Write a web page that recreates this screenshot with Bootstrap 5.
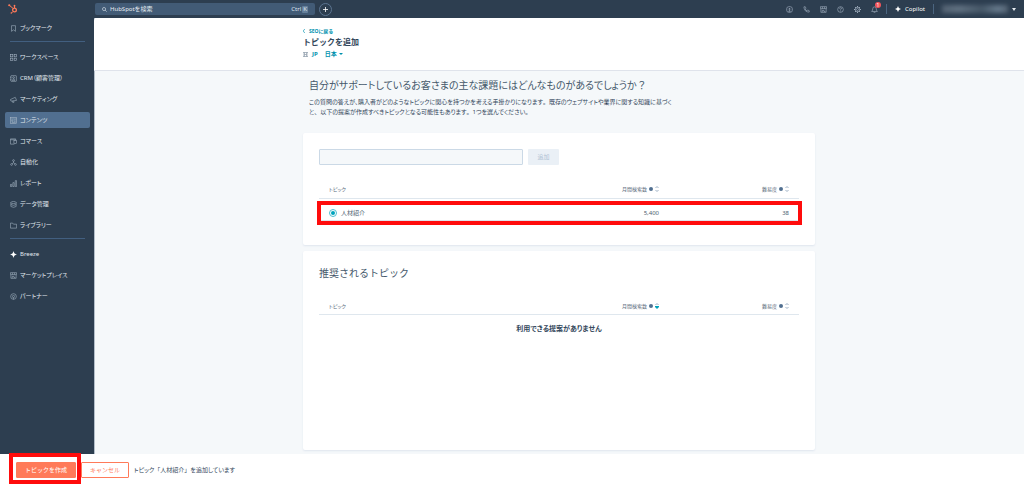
<!DOCTYPE html>
<html lang="ja">
<head>
<meta charset="utf-8">
<meta name="viewport" content="width=device-width, initial-scale=1">
<title>トピックを追加</title>
<link href="https://cdn.jsdelivr.net/npm/bootstrap@5.3.0/dist/css/bootstrap.min.css" rel="stylesheet">
<style>
  :root { --navy:#2d3e50; --slate:#425b76; --ink:#33475b; --teal:#0091ae; --orange:#ff7a59; --mist:#f5f8fa; --mark-red:#ff0c0c; }
  body { font-family:"Noto Sans","Noto Sans CJK JP",sans-serif; font-size:6px; line-height:10px; color:var(--ink); font-feature-settings:"palt"; background:#fff; }
  svg { display:block; flex:none; fill:none; stroke:currentColor; stroke-width:1.3; }
  a { text-decoration:none; }
  button { line-height:10px; }
  .ic { width:7px; height:7px; }
  .full { font-feature-settings:normal; }

  .topbar { background:var(--navy); height:18px; color:#b6c3d0; }
  .brand { width:95px; padding-left:8px; color:var(--orange); }
  .brand svg { width:10px; height:10px; stroke-width:2; }
  .searchbox { width:220px; height:12px; background:var(--slate); border-radius:2px; padding:0 9px 0 7px; gap:3px; color:#dde5ed; }
  .searchbox svg { width:5px; height:5px; stroke-width:2; }
  .searchbox input { border:0; background:none; color:inherit; font-size:6px; line-height:10px; padding:0; outline:0; min-width:0; }
  .searchbox input::placeholder { color:#e6ecf2; opacity:1; }
  .searchbox kbd { font:inherit; color:#dde5ed; background:none; padding:0; margin-right:-2px; }
  .searchbox kbd + kbd { background:#65809b; border-radius:1px; padding:0 1px; line-height:7px; }
  .plus { width:13px; height:13px; border:1px solid #5b7490; border-radius:50%; margin-left:4px; color:#fff; }
  .plus svg { width:5px; height:5px; }
  .tool { width:7px; height:12px; color:#aab9c8; }
  .tools { gap:10px; }
  .alert-dot { top:-1px; left:4px; width:6px; height:6px; border-radius:50%; background:#f2545b; color:#fff; font-size:5px; line-height:6px; }
  .rule-v { width:1px; height:10px; background:#4b6580; }
  .account { width:66px; height:8px; background:linear-gradient(90deg,#526171,#607080 25%,#465767 60%,#65788a 85%,#526171); filter:blur(2px); }
  .caret { width:0; height:0; border:2px solid transparent; border-top:3px solid #e5ebf0; border-bottom:0; }
  .caret-teal { border-top:2px solid var(--teal); margin-left:2px; }

  .side { width:94px; background:var(--navy); padding:2px 4px 0 5px; }
  .side a { height:16px; margin-bottom:5px; padding-left:5px; gap:3px; color:#e1e8ef; border-radius:2px; }
  .side a svg { color:#a9b8c7; }
  .side a.active { background:#516f90; }
  .side hr { margin:3px 0 7px 5px; border-top:1px solid #425f80; opacity:1; width:75px; }

  .page { background:var(--mist); box-shadow:inset 1px 0 #b4bfca; min-width:0; }
  .page-head { background:#fff; border-bottom:1px solid #dfe3eb; height:53px; border-top-left-radius:3px; padding-top:8px; }
  .page-wrap { background:var(--navy); }
  .column-main { width:100%; max-width:512px; }
  .text-teal { color:var(--teal); }
  .back { font-size:5px; }
  .title-main { font-size:8px; line-height:12px; }
  .locale { padding-top:1px; }
  .locale button { font-size:6px; margin-left:7px; }
  .locale svg { width:5px; height:5px; color:#8393a3; }
  .lead-title { font-size:10px; line-height:16px; color:#45586b; }
  .intro { padding:6px 6px 16px; }
  .intro p { margin-top:4px; width:368px; }
  .panel { background:#fff; border-radius:2px; box-shadow:0 1px 2px #dfe6ee; padding:16px; }
  .topic-input { width:204px; height:16px; background:var(--mist); border:1px solid #cbd9e6; border-radius:1px; font-size:6px; padding:0 4px; }
  .add-btn { width:31px; height:16px; background:#eaf0f6; color:#b0c1d4; border:0; border-radius:1px; }
  .topics { width:100%; table-layout:fixed; }
  .topics th { font-size:5px; font-weight:400; height:17px; padding:0 10px; border-bottom:1px solid #dfe7ee; color:#5b6b7c; }
  .topics td { height:22px; padding:7px 10px 0; border-bottom:1px solid #dfe3eb; color:#4c5e70; }
  .topics .num { width:130px; }
  .topics .plain { height:28px; border:0; font-size:7px; padding:0; color:var(--ink); }
  .sort { gap:2px; }
  .info-dot { width:4px; height:4px; border-radius:50%; background:#516f90; }
  .sorter { width:4px; height:6px; stroke-width:1; color:#9db0c4; }
  .topics input[type=radio] { appearance:none; width:8px; height:8px; margin:0; padding:1px; border:1px solid #4fbfd2; border-radius:50%; background:#00a4bd content-box; }
  .framed { position:relative; }
  .framed::after { content:""; position:absolute; border:4px solid var(--mark-red); pointer-events:none; }
  .row-frame::after { left:-2px; right:-3px; bottom:-4px; height:24px; }
  .btn-frame::after { inset:-9px -5px -6px -7px; z-index:2; }
  .actions { height:32px; padding:0 16px; gap:5px; background:#fff; }
  .actions button { height:16px; border:1px solid var(--orange); border-radius:1px; }
  .make { width:60px; background:var(--orange); color:#fff; }
  .cancel { width:48px; background:#fff; color:var(--orange); }
</style>
</head>
<body class="vh-100 d-flex flex-column">

<header class="topbar d-flex align-items-center flex-shrink-0">
  <a href="#" class="brand" aria-label="HubSpot">
    <svg viewBox="0 0 20 20"><circle cx="13" cy="12" r="3.7" stroke-width="2.6"/><path d="M3 3l7.500 6M13 8V4M10 15l-3 3"/><g fill="currentColor" stroke="none"><circle cx="2.500" cy="2.500" r="2.200"/><circle cx="13" cy="3.400" r="1.900"/><circle cx="6.600" cy="18" r="1.600"/></g></svg>
  </a>
  <div class="searchbox d-flex align-items-center">
    <svg viewBox="0 0 16 16"><circle cx="6.500" cy="6.500" r="5"/><path d="M10 10l5 5"/></svg>
    <input class="flex-grow-1" type="text" placeholder="HubSpotを検索" aria-label="HubSpotを検索">
    <kbd>Ctrl</kbd><kbd>K</kbd>
  </div>
  <button class="plus btn p-0 d-flex align-items-center justify-content-center" aria-label="作成"><svg viewBox="0 0 10 10"><path d="M5 0v10M0 5h10" stroke-width="1.600"/></svg></button>
  <div class="tools d-flex align-items-center ms-auto">
    <button class="tool btn p-0 border-0 d-flex align-items-center" aria-label="アップグレード"><svg class="ic" viewBox="0 0 16 16"><rect x="1.500" y="1.500" width="13" height="13" rx="5"/><path d="M8 12V5M5 8l3-3 3 3M5 12h6"/></svg></button>
    <button class="tool btn p-0 border-0 d-flex align-items-center" aria-label="電話"><svg class="ic" viewBox="0 0 16 16"><path d="M2 2l3-.5 2 4-2 1.500q1.500 3 4 4l1.500-2 4 2-.5 3Q3 14 2 2z"/></svg></button>
    <button class="tool btn p-0 border-0 d-flex align-items-center" aria-label="マーケットプレイス"><svg class="ic" viewBox="0 0 16 16"><path d="M2 6.500v8h12v-8M1 1.500h14V6H1zM5.500 2v4M10.500 2v4M5 14v-4h4v2.500h3"/></svg></button>
    <button class="tool btn p-0 border-0 d-flex align-items-center" aria-label="ヘルプ"><svg class="ic" viewBox="0 0 16 16"><circle cx="8" cy="8" r="6.500"/><path d="M5.800 6q.2-2 2.200-2t2.200 2Q10 7.500 8 8.500V10M8 11v1.500"/></svg></button>
    <button class="tool btn p-0 border-0 d-flex align-items-center" aria-label="設定"><svg class="ic" viewBox="0 0 16 16"><circle cx="8" cy="8" r="2.300"/><circle cx="8" cy="8" r="5.300"/><path d="M8 0v3M8 13v3M0 8h3M13 8h3M2.500 2.500l2 2M11.500 11.500l2 2M13.500 2.500l-2 2M4.500 11.500l-2 2" stroke-width="2"/></svg></button>
    <button class="tool btn p-0 border-0 d-flex align-items-center position-relative" aria-label="通知"><svg class="ic" viewBox="0 0 16 16"><path d="M1.500 12.500Q4 10 4 6q0-4 4-4t4 4q0 4 2.500 6.500zM6 14.500h4"/></svg><span class="alert-dot position-absolute text-center">1</span></button>
  </div>
  <span class="rule-v mx-2"></span>
  <a href="#" class="d-flex align-items-center text-white gap-1"><svg style="width:6px;height:6px" viewBox="0 0 16 16"><path d="M8 0q1 7 8 8-7 1-8 8-1-7-8-8 7-1 8-8z" fill="#fff" stroke="none"/></svg>Copilot</a>
  <span class="rule-v mx-2"></span>
  <button class="btn p-0 border-0 d-flex align-items-center gap-1 me-2" aria-label="アカウント"><span class="account"></span><span class="caret"></span></button>
</header>

<div class="d-flex flex-grow-1" style="min-height:0">
  <nav class="side flex-shrink-0" aria-label="メイン">
    <a href="#" class="d-flex align-items-center"><svg class="ic" viewBox="0 0 16 16"><path d="M3.500 1.500h9v13L8 11l-4.500 3.500z"/></svg>ブックマーク</a>
    <hr>
    <a href="#" class="d-flex align-items-center"><svg class="ic" viewBox="0 0 16 16"><rect x="1" y="1" width="5.500" height="5.500"/><rect x="9.500" y="1" width="5.500" height="5.500"/><rect x="1" y="9.500" width="5.500" height="5.500"/><rect x="9.500" y="9.500" width="5.500" height="5.500"/></svg>ワークスペース</a>
    <a href="#" class="d-flex align-items-center"><svg class="ic" viewBox="0 0 16 16"><rect x="2" y="1.500" width="12.500" height="13" rx="1"/><circle cx="8.200" cy="6" r="2"/><path d="M5 12q3.200-5 6.500 0zM0 5h3M0 11h3"/></svg>CRM（顧客管理）</a>
    <a href="#" class="d-flex align-items-center"><svg class="ic" viewBox="0 0 16 16"><path d="M1 8l11-5 3 7-11 1.500H2zM5 11.500l1 3h3l-.5-3.500"/></svg>マーケティング</a>
    <a href="#" class="active d-flex align-items-center" aria-current="page"><svg class="ic" viewBox="0 0 16 16"><rect x="1" y="1" width="14" height="14"/><path d="M1 4.500h14M4 7h3v3H4zM9 7h4M9 10h4M4 12.500h9"/></svg>コンテンツ</a>
    <a href="#" class="d-flex align-items-center"><svg class="ic" viewBox="0 0 16 16"><path d="M13 5V2H1v12h9M1 4h12"/><rect x="9" y="6" width="6" height="6"/></svg>コマース</a>
    <a href="#" class="d-flex align-items-center"><svg class="ic" viewBox="0 0 16 16"><circle cx="8" cy="3.500" r="2"/><circle cx="3.500" cy="12.500" r="2"/><circle cx="12.500" cy="12.500" r="2"/><path d="M8 5.500v3L4.500 11M8 8.500l3.500 2.500"/></svg>自動化</a>
    <a href="#" class="d-flex align-items-center"><svg class="ic" viewBox="0 0 16 16"><path d="M1 10h3v5H1zM6.500 6h3v9h-3zM12 1.500h3V15h-3z"/></svg>レポート</a>
    <a href="#" class="d-flex align-items-center"><svg class="ic" viewBox="0 0 16 16"><ellipse cx="8" cy="3.500" rx="6" ry="2.300"/><path d="M2 3.500v9q6 4 12 0v-9M2 8q6 4 12 0"/></svg>データ管理</a>
    <a href="#" class="d-flex align-items-center"><svg class="ic" viewBox="0 0 16 16"><path d="M1 2.500h5l2 2.500h7v9H1z"/></svg>ライブラリー</a>
    <hr>
    <a href="#" class="d-flex align-items-center"><svg class="ic" viewBox="0 0 16 16"><path d="M8 0q1 7 8 8-7 1-8 8-1-7-8-8 7-1 8-8z" fill="#fff" stroke="none"/></svg>Breeze</a>
    <a href="#" class="d-flex align-items-center"><svg class="ic" viewBox="0 0 16 16"><path d="M2 6.500v8h12v-8M1 1.500h14V6H1zM5.500 2v4M10.500 2v4M5 14v-4h4v2.500h3"/></svg>マーケットプレイス</a>
    <a href="#" class="d-flex align-items-center"><svg class="ic" viewBox="0 0 16 16"><circle cx="8" cy="8" r="6.500"/><circle cx="8" cy="8" r="2.500"/><path d="M8 10.500v4"/></svg>パートナー</a>
  </nav>

  <div class="page-wrap flex-grow-1 d-flex">
  <main class="page flex-grow-1 d-flex flex-column">
    <div class="page-head flex-shrink-0">
      <div class="column-main mx-auto">
        <a href="#" class="back text-teal fw-bold d-flex align-items-center gap-1"><svg style="width:2px;height:4px" viewBox="0 0 4 8"><path d="M3.500 0L.5 4l3 4"/></svg>SEOに戻る</a>
        <h1 class="title-main full fw-bold mb-0">トピックを追加</h1>
        <div class="locale d-flex align-items-center fw-bold text-teal">
          <svg class="me-1" viewBox="0 0 10 10"><path d="M0 1h10v8H0zM3 1v8M7 1v8M3 5h4"/></svg>
          <span>JP</span>
          <button class="btn p-0 border-0 text-teal fw-bold d-flex align-items-center">日本<span class="caret caret-teal"></span></button>
        </div>
      </div>
    </div>

    <div class="column-main mx-auto flex-grow-1 d-flex flex-column pb-1">
      <section class="intro">
        <h2 class="lead-title fw-normal mb-0">自分がサポートしているお客さまの主な課題にはどんなものがあるでしょうか<span class="full">？</span></h2>
        <p class="mb-0">この質問の答えが、購入者がどのようなトピックに関心を持つかを考える手掛かりになります<span class="full">。</span>既存のウェブサイトや業界に関する知識に基づくと<span class="full">、</span>以下の提案が作成すべきトピックとなる可能性もあります<span class="full">。</span>1つを選んでください。</p>
      </section>

      <section class="panel pb-4" style="margin-bottom:6px">
        <form class="d-flex mb-3" style="gap:5px">
          <input class="topic-input" type="text" aria-label="トピック">
          <button class="add-btn p-0" type="button" disabled>追加</button>
        </form>
        <div class="framed row-frame">
          <table class="topics">
            <thead><tr>
              <th>トピック</th>
              <th class="num"><span class="sort d-flex align-items-center justify-content-end">月間検索数<i class="info-dot"></i><svg class="sorter" viewBox="0 0 4 6"><path d="M.5 2L2 .5 3.500 2M.5 4L2 5.500 3.500 4"/></svg></span></th>
              <th class="num"><span class="sort d-flex align-items-center justify-content-end">難易度<i class="info-dot"></i><svg class="sorter" viewBox="0 0 4 6"><path d="M.5 2L2 .5 3.500 2M.5 4L2 5.500 3.500 4"/></svg></span></th>
            </tr></thead>
            <tbody><tr>
              <td><label class="full d-flex align-items-center gap-1"><input type="radio" name="topic" checked>人材紹介</label></td>
              <td class="text-end">5,400</td>
              <td class="text-end">38</td>
            </tr></tbody>
          </table>
        </div>
      </section>

      <section class="panel flex-grow-1">
        <h2 class="lead-title full fw-normal" style="margin:-2px 0 17px">推奨されるトピック</h2>
        <table class="topics">
          <thead><tr>
            <th>トピック</th>
            <th class="num"><span class="sort d-flex align-items-center justify-content-end">月間検索数<i class="info-dot"></i><svg class="sorter" viewBox="0 0 4 6"><path d="M.5 2L2 .5 3.500 2"/><path d="M0 3h4v1L2 6 0 4z" fill="#00a4bd" stroke="none"/></svg></span></th>
            <th class="num"><span class="sort d-flex align-items-center justify-content-end">難易度<i class="info-dot"></i><svg class="sorter" viewBox="0 0 4 6"><path d="M.5 2L2 .5 3.500 2M.5 4L2 5.500 3.500 4"/></svg></span></th>
          </tr></thead>
          <tbody><tr><td class="plain text-center fw-bold" colspan="3">利用できる提案がありません</td></tr></tbody>
        </table>
      </section>
    </div>
  </main>
  </div>
</div>

<footer class="actions d-flex align-items-center flex-shrink-0">
  <span class="framed btn-frame d-flex"><button class="make p-0">トピックを作成</button></span>
  <button class="cancel p-0">キャンセル</button>
  <span>トピック<span class="full">「</span>人材紹介<span class="full">」</span>を追加しています</span>
</footer>

<script src="https://cdn.jsdelivr.net/npm/bootstrap@5.3.0/dist/js/bootstrap.bundle.min.js"></script>
</body>
</html>
